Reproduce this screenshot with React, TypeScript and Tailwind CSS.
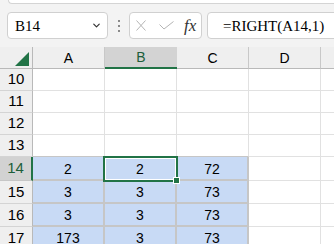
import { ChevronDown } from "lucide-react"

const green = "#217346"

type Cell = { text?: string; fill?: boolean }

const rows: { num: number; h: string; cells: Cell[] }[] = [
  { num: 10, h: "h-[22px]", cells: [{}, {}, {}, {}, {}] },
  { num: 11, h: "h-[22px]", cells: [{}, {}, {}, {}, {}] },
  { num: 12, h: "h-[22px]", cells: [{}, {}, {}, {}, {}] },
  { num: 13, h: "h-[22px]", cells: [{}, {}, {}, {}, {}] },
  { num: 14, h: "h-[24px]", cells: [{ text: "2", fill: true }, { text: "2", fill: true }, { text: "72", fill: true }, {}, {}] },
  { num: 15, h: "h-[23px]", cells: [{ text: "3", fill: true }, { text: "3", fill: true }, { text: "73", fill: true }, {}, {}] },
  { num: 16, h: "h-[23px]", cells: [{ text: "3", fill: true }, { text: "3", fill: true }, { text: "73", fill: true }, {}, {}] },
  { num: 17, h: "h-[23px]", cells: [{ text: "173", fill: true }, { text: "3", fill: true }, { text: "73", fill: true }, {}, {}] },
]

function GridCell({ cell, last, aboveFill }: { cell: Cell; last: boolean; aboveFill: boolean }) {
  const w = last ? "w-[40px] shrink-0" : "w-[72px] shrink-0"
  if (cell.fill) {
    return (
      <div className={`${w} h-full bg-[#c8daf5] border-r-2 border-b-2 border-[#c6c6c6] flex items-center justify-center pt-[2px] text-[14px]`}>
        {cell.text}
      </div>
    )
  }
  return (
    <div className={`${w} h-full border-r border-b ${aboveFill ? "border-r-[#e1e1e1] border-b-[#c6c6c6]" : "border-[#e1e1e1]"}`}></div>
  )
}

export default function App() {
  return (
    <div className="w-[334px] h-[244px] overflow-hidden bg-[#f3f3f3] text-black" style={{ fontFamily: "'Liberation Sans', Arial, sans-serif" }}>
      <div className="h-[4px] ml-[8px] bg-white border-l border-b border-[#d4d4d4] rounded-bl-[4px]"></div>

      <div className="flex items-center h-[27px] mt-[8px] pl-[7px]">
        <div className="w-[101px] h-[27px] shrink-0 bg-white border border-[#d0d0d0] rounded-[4px] flex items-center pl-[7px] pr-[5px]">
          <span className="flex-1 text-[15px] pt-[1px]" style={{ fontFamily: "'Liberation Serif', 'Times New Roman', serif" }}>B14</span>
          <ChevronDown size={11} strokeWidth={2.6} className="text-[#333]" />
        </div>
        <div className="w-[21px] shrink-0 flex flex-col items-center gap-[3px]">
          <span className="w-[2px] h-[2px] bg-[#8a8a8a]"></span>
          <span className="w-[2px] h-[2px] bg-[#8a8a8a]"></span>
          <span className="w-[2px] h-[2px] bg-[#8a8a8a]"></span>
        </div>
        <div className="w-[73px] h-[27px] shrink-0 bg-white border border-[#d0d0d0] rounded-[4px] flex items-center pl-[5px]">
          <svg width="10" height="11" viewBox="0 0 10 11" className="ml-[1px]">
            <path d="M0.5 0.5 L9.5 10.5 M9.5 0.5 L0.5 10.5" stroke="#b4b4b4" strokeWidth="1" fill="none" />
          </svg>
          <svg width="15" height="9" viewBox="0 0 15 9" className="ml-[13px]">
            <path d="M0.5 3.5 L5 8 L14.5 0.5" stroke="#b4b4b4" strokeWidth="1" fill="none" />
          </svg>
          <span className="ml-[10px] text-[17px] italic text-[#333] leading-none" style={{ fontFamily: "'Liberation Serif', 'Times New Roman', serif" }}>fx</span>
        </div>
        <div className="ml-[5px] w-[140px] h-[27px] shrink-0 bg-white border border-[#d0d0d0] rounded-[4px] flex items-center pl-[15px]">
          <span className="text-[15px] pt-[1px] whitespace-nowrap" style={{ fontFamily: "'Liberation Serif', 'Times New Roman', serif" }}>=RIGHT(A14,1)</span>
        </div>
      </div>

      <div className="relative mt-[8px] bg-white">
        <div className="flex h-[22px] bg-[#efefef] text-[14px]">
          <div className="w-[33px] shrink-0 border-r border-b border-[#b9b9b9] flex items-end justify-end pr-[3px] pb-[2px]">
            <svg width="14" height="14" viewBox="0 0 14 14">
              <path d="M14 0 L14 14 L0 14 Z" fill={green} />
            </svg>
          </div>
          {["A", "B", "C", "D", ""].map((c, i) => (
            <div
              key={i}
              className={`${i === 4 ? "w-[40px]" : "w-[72px]"} shrink-0 flex items-center justify-center pt-[1px] ${
                c === "B"
                  ? "bg-[#d3d3d3] border-b-2 border-[#217346] text-[#1d5e3a]"
                  : "border-r border-r-[#c8c8c8] border-b border-b-[#b9b9b9]"
              }`}
            >
              {c}
            </div>
          ))}
        </div>

        {rows.map((r, ri) => (
          <div key={r.num} className={`flex ${r.h}`}>
            <div
              className={`w-[33px] shrink-0 flex items-center justify-center text-[15px] border-b ${
                r.num === 14
                  ? "bg-[#d2d2d2] border-r-2 border-r-[#217346] border-b-[#c6c6c6] text-[#1d5e3a]"
                  : "bg-[#efefef] border-r border-r-[#b9b9b9] border-b-[#d4d4d4]"
              }`}
            >
              {r.num}
            </div>
            {r.cells.map((c, ci) => (
              <GridCell
                key={ci}
                cell={c}
                last={ci === 4}
                aboveFill={ci < 3 && !!rows[ri + 1]?.cells[ci]?.fill && !c.fill}
              />
            ))}
          </div>
        ))}

        <div className="absolute left-[103px] top-[109px] w-[75px] h-[26px] border-2 border-[#217346]">
          <div className="w-full h-full border border-white"></div>
        </div>
        <div className="absolute left-[173px] top-[130px] w-[7px] h-[7px] bg-[#217346] border border-white"></div>
      </div>
    </div>
  )
}
